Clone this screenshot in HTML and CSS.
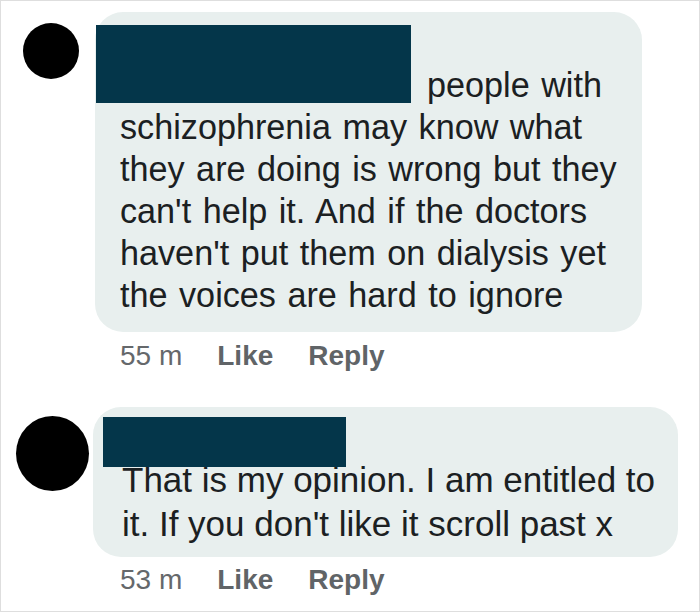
FILE: index.html
```html
<!DOCTYPE html>
<html>
<head>
<meta charset="UTF-8">
<title>Comments</title>
<link rel="stylesheet" href="styles.css">
</head>
<body>
<div class="frame">
<div class="comment first">
<div class="avatar"></div>
<div class="body">
<div class="bubble">
<div class="redact"></div>
<p class="text lead">people with<br>schizophrenia may know what<br>they are doing is wrong but they<br>can't help it. And if the doctors<br>haven't put them on dialysis yet<br>the voices are hard to ignore</p>
</div>
<div class="meta"><span class="time">55 m</span><span class="action">Like</span><span class="action">Reply</span></div>
</div>
</div>
<div class="comment second">
<div class="avatar"></div>
<div class="body">
<div class="bubble">
<div class="redact"></div>
<p class="text">That is my opinion. I am entitled to<br>it. If you don't like it scroll past x</p>
</div>
<div class="meta"><span class="time">53 m</span><span class="action">Like</span><span class="action">Reply</span></div>
</div>
</div>
</div>
</body>
</html>
```
FILE: styles.css
```css
body{margin:0;background-color:white;font-family:'Liberation Sans',Arial,sans-serif;}
.frame{width:700px;height:612px;box-sizing:border-box;border:1px solid #dedede;overflow:hidden;}
.comment{display:flex;align-items:flex-start;}
.avatar{background-color:#000;border-radius:50%;flex:none;}
.bubble{position:relative;background-color:#e8efee;border-radius:28px;}
.redact{position:absolute;background-color:#04364a;}
.text{margin:0;color:#1b2022;font-size:34.2px;word-spacing:2px;white-space:nowrap;}
.meta{font-size:28px;line-height:32px;color:#65686b;}
.action{font-weight:bold;color:#606467;margin-left:35px;}

/* first comment */
.first{padding-top:11px;}
.first .avatar{width:56px;height:56px;margin:11px 16px 0 22px;}
.first .bubble{width:547px;padding:52px 10px 16px 25px;box-sizing:border-box;}
.first .redact{left:1px;top:13px;width:315px;height:78px;}
.first .text{line-height:42px;}
.first .lead{text-indent:307px;}
.first .meta{margin-top:8px;padding-left:25px;}

/* second comment */
.second{margin-top:35px;}
.second .avatar{width:73px;height:75px;margin:9px 4px 0 15px;}
.second .bubble{width:585px;padding:51px 10px 11px 29px;box-sizing:border-box;}
.second .redact{left:10px;top:10px;width:243px;height:50px;}
.second .text{line-height:44px;font-size:35px;word-spacing:0;}
.second .meta{margin-top:7px;padding-left:27px;}
```
